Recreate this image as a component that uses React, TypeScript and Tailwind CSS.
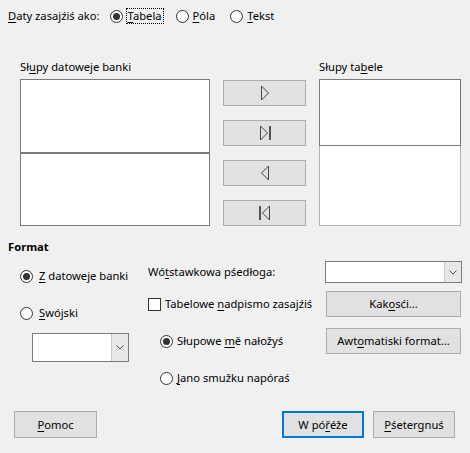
import React from "react";

/* ---------- small controls ---------- */

function U({ children }: { children: React.ReactNode }) {
  return <span className="underline underline-offset-2">{children}</span>;
}

function Radio({ checked }: { checked?: boolean }) {
  return (
    <span className="flex h-[13px] w-[13px] shrink-0 items-center justify-center rounded-full border border-[#333] bg-white">
      {checked && <span className="h-[7px] w-[7px] rounded-full bg-[#333]" />}
    </span>
  );
}

function Check() {
  return <span className="h-[13px] w-[13px] shrink-0 border border-[#333] bg-white" />;
}

function Chevron() {
  return (
    <svg width="8" height="5" viewBox="0 0 8 5" fill="none">
      <path d="M0.5 0.5 L4 4 L7.5 0.5" stroke="#555" strokeWidth="1" />
    </svg>
  );
}

function Combo({ className }: { className: string }) {
  return (
    <div className={`flex border border-[#7a7a7a] bg-white ${className}`}>
      <div className="flex-1" />
      <div className="flex w-[17px] items-center justify-center border-l border-[#c8c8c8] bg-[#e8e8e8]">
        <Chevron />
      </div>
    </div>
  );
}

function Btn({
  children,
  className = "",
  primary,
}: {
  children: React.ReactNode;
  className?: string;
  primary?: boolean;
}) {
  return (
    <div
      className={`flex items-center justify-center bg-[#e1e1e1] ${
        primary ? "border-2 border-[#0078d7]" : "border border-[#adadad]"
      } ${className}`}
    >
      {children}
    </div>
  );
}

/* ---------- arrow glyphs ---------- */

function Arrow({ dir, bar }: { dir: "r" | "l"; bar?: boolean }) {
  return (
    <svg width="14" height="16" viewBox="0 0 14 16" fill="none">
      {dir === "r" && !bar && <path d="M3.5 1 L10.5 8 L3.5 15 Z" stroke="#444" />}
      {dir === "r" && bar && (
        <>
          <path d="M2.5 1 L9.5 8 L2.5 15 Z" stroke="#444" />
          <path d="M12 1 V15" stroke="#222" strokeWidth="1.5" />
        </>
      )}
      {dir === "l" && !bar && <path d="M10.5 1 L3.5 8 L10.5 15 Z" stroke="#444" />}
      {dir === "l" && bar && (
        <>
          <path d="M2 1 V15" stroke="#222" strokeWidth="1.5" />
          <path d="M11.5 1 L4.5 8 L11.5 15 Z" stroke="#444" />
        </>
      )}
    </svg>
  );
}

/* ---------- dialog ---------- */

export default function App() {
  return (
    <div
      className="flex h-[453px] w-[470px] flex-col bg-[#f0f0f0] text-[11.2px] leading-[14px] text-black"
      style={{ fontFamily: '"Noto Sans", "Open Sans", sans-serif' }}
    >
      {/* TOP ROW */}
      <div className="mt-[9px] flex h-[14px] items-center pl-[8px]">
        <span>
          <U>D</U>aty zasajźiś ako:
        </span>
        <div className="ml-[10px] flex items-center">
          <Radio checked />
          <span className="ml-[3px] border border-dotted border-black px-[1px]">
            <U>T</U>abela
          </span>
        </div>
        <div className="ml-[12px] flex items-center">
          <Radio />
          <span className="ml-[4px]">
            <U>P</U>óla
          </span>
        </div>
        <div className="ml-[15px] flex items-center">
          <Radio />
          <span className="ml-[4px]">
            <U>T</U>ekst
          </span>
        </div>
      </div>

      {/* LISTS */}
      <div className="mt-[37px] flex pl-[20px]">
        <div className="w-[190px]">
          <div className="h-[19px]">
            Sł<U>u</U>py datoweje banki
          </div>
          <div className="h-[74px] border border-[#7a7a7a] bg-white" />
          <div className="h-[73px] border border-[#7a7a7a] bg-white" />
        </div>

        <div className="ml-[13px] mt-[20px] flex w-[83px] flex-col gap-[14px]">
          <Btn className="h-[26px]">
            <Arrow dir="r" />
          </Btn>
          <Btn className="h-[26px]">
            <Arrow dir="r" bar />
          </Btn>
          <Btn className="h-[26px]">
            <Arrow dir="l" />
          </Btn>
          <Btn className="h-[26px]">
            <Arrow dir="l" bar />
          </Btn>
        </div>

        <div className="ml-[13px] w-[142px]">
          <div className="h-[19px]">
            Słupy ta<U>b</U>ele
          </div>
          <div className="h-[67px] border border-[#7a7a7a] bg-white" />
          <div className="h-[80px] border border-t-0 border-[#b4b4b4] bg-white" />
        </div>
      </div>

      {/* FORMAT */}
      <div className="mt-[14px] h-[14px] pl-[8px] font-bold">Format</div>

      <div className="mt-[7px] flex">
        {/* left column */}
        <div className="w-[148px] pl-[20px]">
          <div className="mt-[8px] flex h-[14px] items-center">
            <Radio checked />
            <span className="ml-[6px]">
              <U>Z</U> datoweje banki
            </span>
          </div>
          <div className="mt-[23px] flex h-[14px] items-center">
            <Radio />
            <span className="ml-[6px]">
              <U>S</U>wójski
            </span>
          </div>
          <Combo className="ml-[12px] mt-[13px] h-[29px] w-[97px]" />
        </div>

        {/* right column */}
        <div className="w-[314px]">
          <div className="flex h-[22px] items-center justify-between">
            <span>
              Wó<U>t</U>stawkowa pśedłoga:
            </span>
            <Combo className="h-[22px] w-[137px]" />
          </div>
          <div className="mt-[8px] flex h-[26px] items-center justify-between">
            <div className="flex items-center">
              <Check />
              <span className="ml-[4px]">
                Tabelowe <U>n</U>adpismo zasajźiś
              </span>
            </div>
            <Btn className="mr-[1px] h-[26px] w-[135px]">
              Kak<U>o</U>sći...
            </Btn>
          </div>
          <div className="mt-[11px] flex h-[26px] items-center justify-between">
            <div className="ml-[12px] flex items-center">
              <Radio checked />
              <span className="ml-[4px]">
                Słupowe <U>m</U>ě nałožyś
              </span>
            </div>
            <Btn className="mr-[1px] h-[26px] w-[135px]">
              Awt<U>o</U>matiski format...
            </Btn>
          </div>
          <div className="ml-[12px] mt-[17px] flex h-[14px] items-center">
            <Radio />
            <span className="ml-[4px]">
              <U>J</U>ano smužku napóraś
            </span>
          </div>
        </div>
      </div>

      {/* BOTTOM BUTTONS */}
      <div className="mb-[15px] mt-auto flex h-[27px] pl-[14px]">
        <Btn className="w-[83px]">
          <U>P</U>omoc
        </Btn>
        <Btn primary className="ml-[185px] w-[82px]">
          W pó<U>ř</U>éže
        </Btn>
        <Btn className="ml-[9px] w-[82px]">
          <U>P</U>śetergnuś
        </Btn>
      </div>
    </div>
  );
}
